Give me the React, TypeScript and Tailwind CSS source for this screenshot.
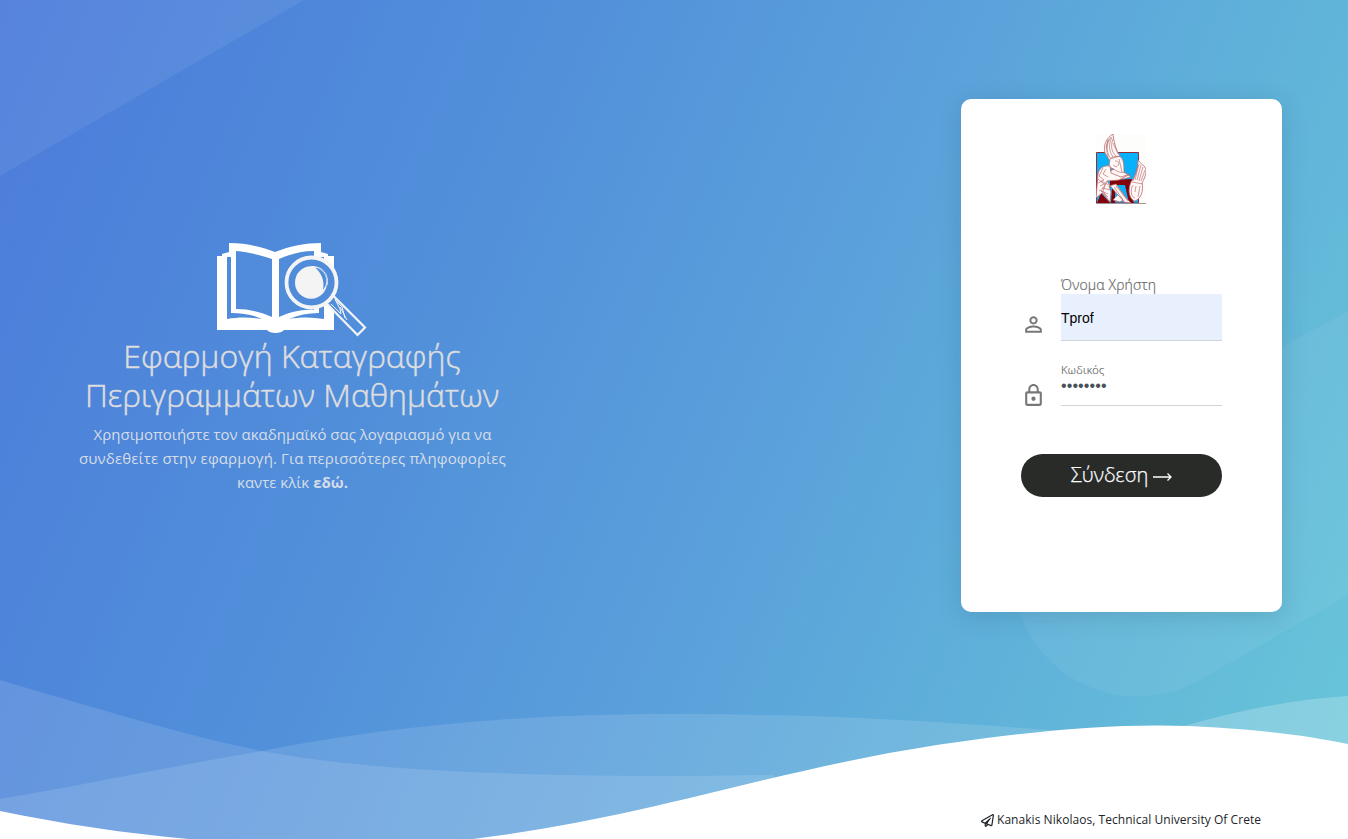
import React from "react";
import { MdOutlinePersonOutline, MdLockOutline } from "react-icons/md";
import { FaRegPaperPlane } from "react-icons/fa";

function Backdrop() {
  return (
    <svg className="absolute inset-0 h-full w-full" viewBox="0 0 1348 839" preserveAspectRatio="none" aria-hidden="true">
      <path d="M0 0H304L0 176Z" fill="#fff" fillOpacity=".065" />
      <path d="M1348 311L1120 434C1050 472 1012 530 1015 590C1022 655 1085 703 1148 696C1168 694 1183 689 1198 681L1348 595Z" fill="#fff" fillOpacity=".055" />
      <path d="M0 680C75 702 190 737 262 751C370 772 530 776 690 776L774 775L774 839H0Z" fill="#fff" fillOpacity=".12" />
      <path d="M0 799C90 784 172 766 262 751C400 724 530 714 674 714C833 714 940 722 1063 731V839H0Z" fill="#fff" fillOpacity=".12" />
      <path d="M1180 727C1235 711 1295 699 1348 696V760H1180Z" fill="#fff" fillOpacity=".22" />
      <path d="M0 811C160 844 315 853 473 839C630 820 740 781 889 753C990 735 1090 725 1160 725.500C1225 726 1295 733 1348 744V839H0Z" fill="#fff" />
    </svg>
  );
}

function BookLogo() {
  return (
    <svg className="-ml-[2px] h-[95px] w-[152px]" viewBox="216 242 152 95" fill="none" aria-hidden="true">
      <path d="M217 256H222V254L229 252V243C246 243 262 247 275 252C290 246 306 243 321 243V252L328 254V256H334V330H284C281 334 270 334 267 330H217Z" fill="#fff" />
      <path d="M236 251C249 252 263 256 272 259V317C261 312 249 309 236 309Z" fill="#508cda" />
      <path d="M279 259C290 254 302 251 314 251V310C302 309 290 312 279 317Z" fill="#508cda" />
      <path d="M227 257H231V313C243 313 254 315 262 319C250 317 238 317 227 319Z" fill="#508cda" />
      <path d="M324 257V319C312 317 300 317 289 319C298 315 308 313 319 313V257Z" fill="#508cda" />
      <path d="M326 301L333 294L366 327L358 337Z" fill="#518edb" />
      <circle cx="311.500" cy="282.500" r="25" fill="#508cda" stroke="#f4f4f4" strokeWidth="3.800" />
      <ellipse cx="311" cy="282.500" rx="16" ry="16.300" fill="#f4f4f4" />
      <path d="M315 267.500C321 272 325 281 323 290C330 282 326 270 315 267.500Z" fill="#508cda" />
      <path d="M311 266.500C323 266 329 275 327 285" stroke="#f4f4f4" strokeWidth="1" />
      <path d="M325 302L357.500 335L365 327.500L331.500 294" stroke="#f4f4f4" strokeWidth="2.200" />
      <path d="M335 299L340 309L341 314M335 300L342 307L345 318M340 307L347 320M331 304L341 314" stroke="#f4f4f4" strokeWidth="1" />
    </svg>
  );
}

function Emblem() {
  return (
    <svg className="-ml-px h-[70px] w-[50px]" viewBox="0 0 50 70" fill="none" aria-hidden="true">
      <path d="M0 0H50V70H0Z" fill="#fdfefc" />
      <path d="M.5 18.500H42.500V69H.5Z" fill="#08b1fb" stroke="#942d35" />
      <path d="M0 69.500H50" stroke="#999" />
      <path d="M1 69L5 59L14 69ZM14 46L36 45L33 56L38 69H33L29 51H14ZM16 55H19V69H15Z" fill="#830209" />
      <g stroke="#b96970" strokeWidth=".8" fill="#fff8f5">
        <path d="M17 0C10 4 7 12 9 19L14 27L24 22C20 16 18 9 17 0Z" />
        <path d="M14 27C12 24 20 21 25 23C28 27 28 31 28 38L35 43L27 45L15 45L11 39L18 35C12 34 13 29 14 27Z" />
        <path d="M14 32C8 31 3 34 2 40L1 52L0 64L6 59L14 68L15 58L13 52L20 50L31 65L35 69L28 68L16 54L11 47L23 46L34 40L25 43L15 39Z" />
        <path d="M42 26C42 36 39 43 35 48C31 57 34 66 39 67C45 65 48 56 46 49C50 42 51 36 49 33C46 30 44 29 42 26Z" />
        <path d="M22 61L27 66L24 68L17 66" />
      </g>
      <g stroke="#ba747a" strokeWidth=".7">
        <path d="M15 3C10 10 10 16 14 24M16 3C12 11 13 17 17 23M17 5C14 13 16 18 20 22M17 9L22 20M12 6L10 14M13 5C9 12 11 19 12 23" />
        <path d="M14 25L24 22M19 27C24 27 24 31 20 33L17 31M23 25L26 38M17 35L23 38L30 39M7 34L3 42L8 46L2 49M10 35L7 40L12 43M5 47L15 52M4 52L10 49M3 56L12 60M6 54L15 56M20 52L32 67M18 53L28 67M2 45L9 51L5 57L12 63M11 47L7 57L12 66" />
        <path d="M43 30L39 46M45 31L41 46M47 33L43 47M49 36L45 47M42 31L37 47M36 48L47 50M37 51C34 56 35 63 39 64M40 52L39 58M44 52L42 63" />
      </g>
    </svg>
  );
}

export default function App() {
  return (
    <main className="relative flex h-[839px] w-full overflow-hidden bg-[linear-gradient(113deg,#4c7bdb_0%,#4e84da_14%,#518fda_32%,#5aa0db_55%,#5eadda_70%,#62b6d9_81%,#68c7d9_100%)] font-['Open_Sans','Noto_Sans',sans-serif]">
      <Backdrop />
      <section className="relative ml-[66px] flex w-[453px] flex-col items-center pt-[242px] text-[#dee2e6]">
        <BookLogo />
        <h1 className="-mt-px text-center text-[32px] font-light leading-[39px] whitespace-nowrap text-[#dddddf] [-webkit-text-stroke:0.5px_#dddddf]">
          <span className="-ml-px block tracking-[0.04px]">Εφαρμογή Καταγραφής</span>
          <span className="-ml-px block">Περιγραμμάτων Μαθημάτων</span>
        </h1>
        <p className="mt-[8px] text-center text-[15px] leading-6 whitespace-nowrap text-[#d5dde8]">
          <span className="block">Χρησιμοποιήστε τον ακαδημαϊκό σας λογαριασμό για να</span>
          <span className="block tracking-[0.14px]">συνδεθείτε στην εφαρμογή. Για περισσότερες πληφοφορίες</span>
          <span className="block">καντε κλίκ <a href="#info" className="font-bold">εδώ.</a></span>
        </p>
      </section>

      <div className="relative ml-auto mr-[66px] flex w-[321px] flex-col">
        <form className="mt-[99px] flex h-[513px] flex-col rounded-[10px] bg-white px-[60px] pt-[35px] shadow-[0_4px_24px_rgba(30,65,95,0.18)]">
          <div className="flex justify-center"><Emblem /></div>
          <div className="mt-[72px] flex">
            <MdOutlinePersonOutline className="mt-[36px] size-[25px] shrink-0 text-[#777]" />
            <div className="ml-[15px] flex w-[161px] flex-col">
              <label htmlFor="user" className="h-[18px] text-[14px] leading-[18px] font-light tracking-[0.16px] whitespace-nowrap text-[#666] [-webkit-text-stroke:0.2px_#666]">Όνομα Χρήστη</label>
              <input id="user" defaultValue="Tprof" className="h-[47px] w-full border-b border-[#ced4da] bg-[#e8f0fe] p-0 pt-[2px] font-['Liberation_Sans',sans-serif] text-[14px] text-black outline-none" />
            </div>
          </div>
          <div className="mt-[20px] flex">
            <MdLockOutline className="mt-[22px] size-[25px] shrink-0 text-[#777]" />
            <div className="ml-[15px] flex w-[161px] flex-col">
              <label htmlFor="password" className="h-[18px] text-[11px] leading-[18px] font-light tracking-[0.35px] whitespace-nowrap text-[#666] [-webkit-text-stroke:0.2px_#666]">Κωδικός</label>
              <input id="password" type="password" defaultValue="password" className="h-[27px] w-full border-b border-[#ced4da] bg-white p-0 pb-[13px] font-['Liberation_Sans',sans-serif] text-[16px] tracking-[0.1px] text-[#495057] outline-none" />
            </div>
          </div>
          <button type="button" className="mt-[46px] flex h-[43px] w-[201px] items-center justify-center rounded-[22px] bg-[#292b29] pb-[2px] text-[20px] font-light text-white [-webkit-text-stroke:0.25px_white]">
            <span>Σύνδεση</span>
            <svg className="mt-[4px] ml-[5px] h-[12px] w-[19px]" viewBox="0 0 19 12" fill="none" stroke="white" strokeWidth="1.3"><path d="M0 6H18M14.500 2.500L18 6L14.500 9.500" /></svg>
          </button>
        </form>
        <footer className="mt-[198px] flex h-[20px] items-center pl-[20px] text-[12px] text-[#212529]">
          <FaRegPaperPlane className="mr-[3px] size-[13px] shrink-0" />
          <span className="tracking-[0.05px] whitespace-nowrap">Kanakis Nikolaos, Technical University Of Crete</span>
        </footer>
      </div>
    </main>
  );
}
